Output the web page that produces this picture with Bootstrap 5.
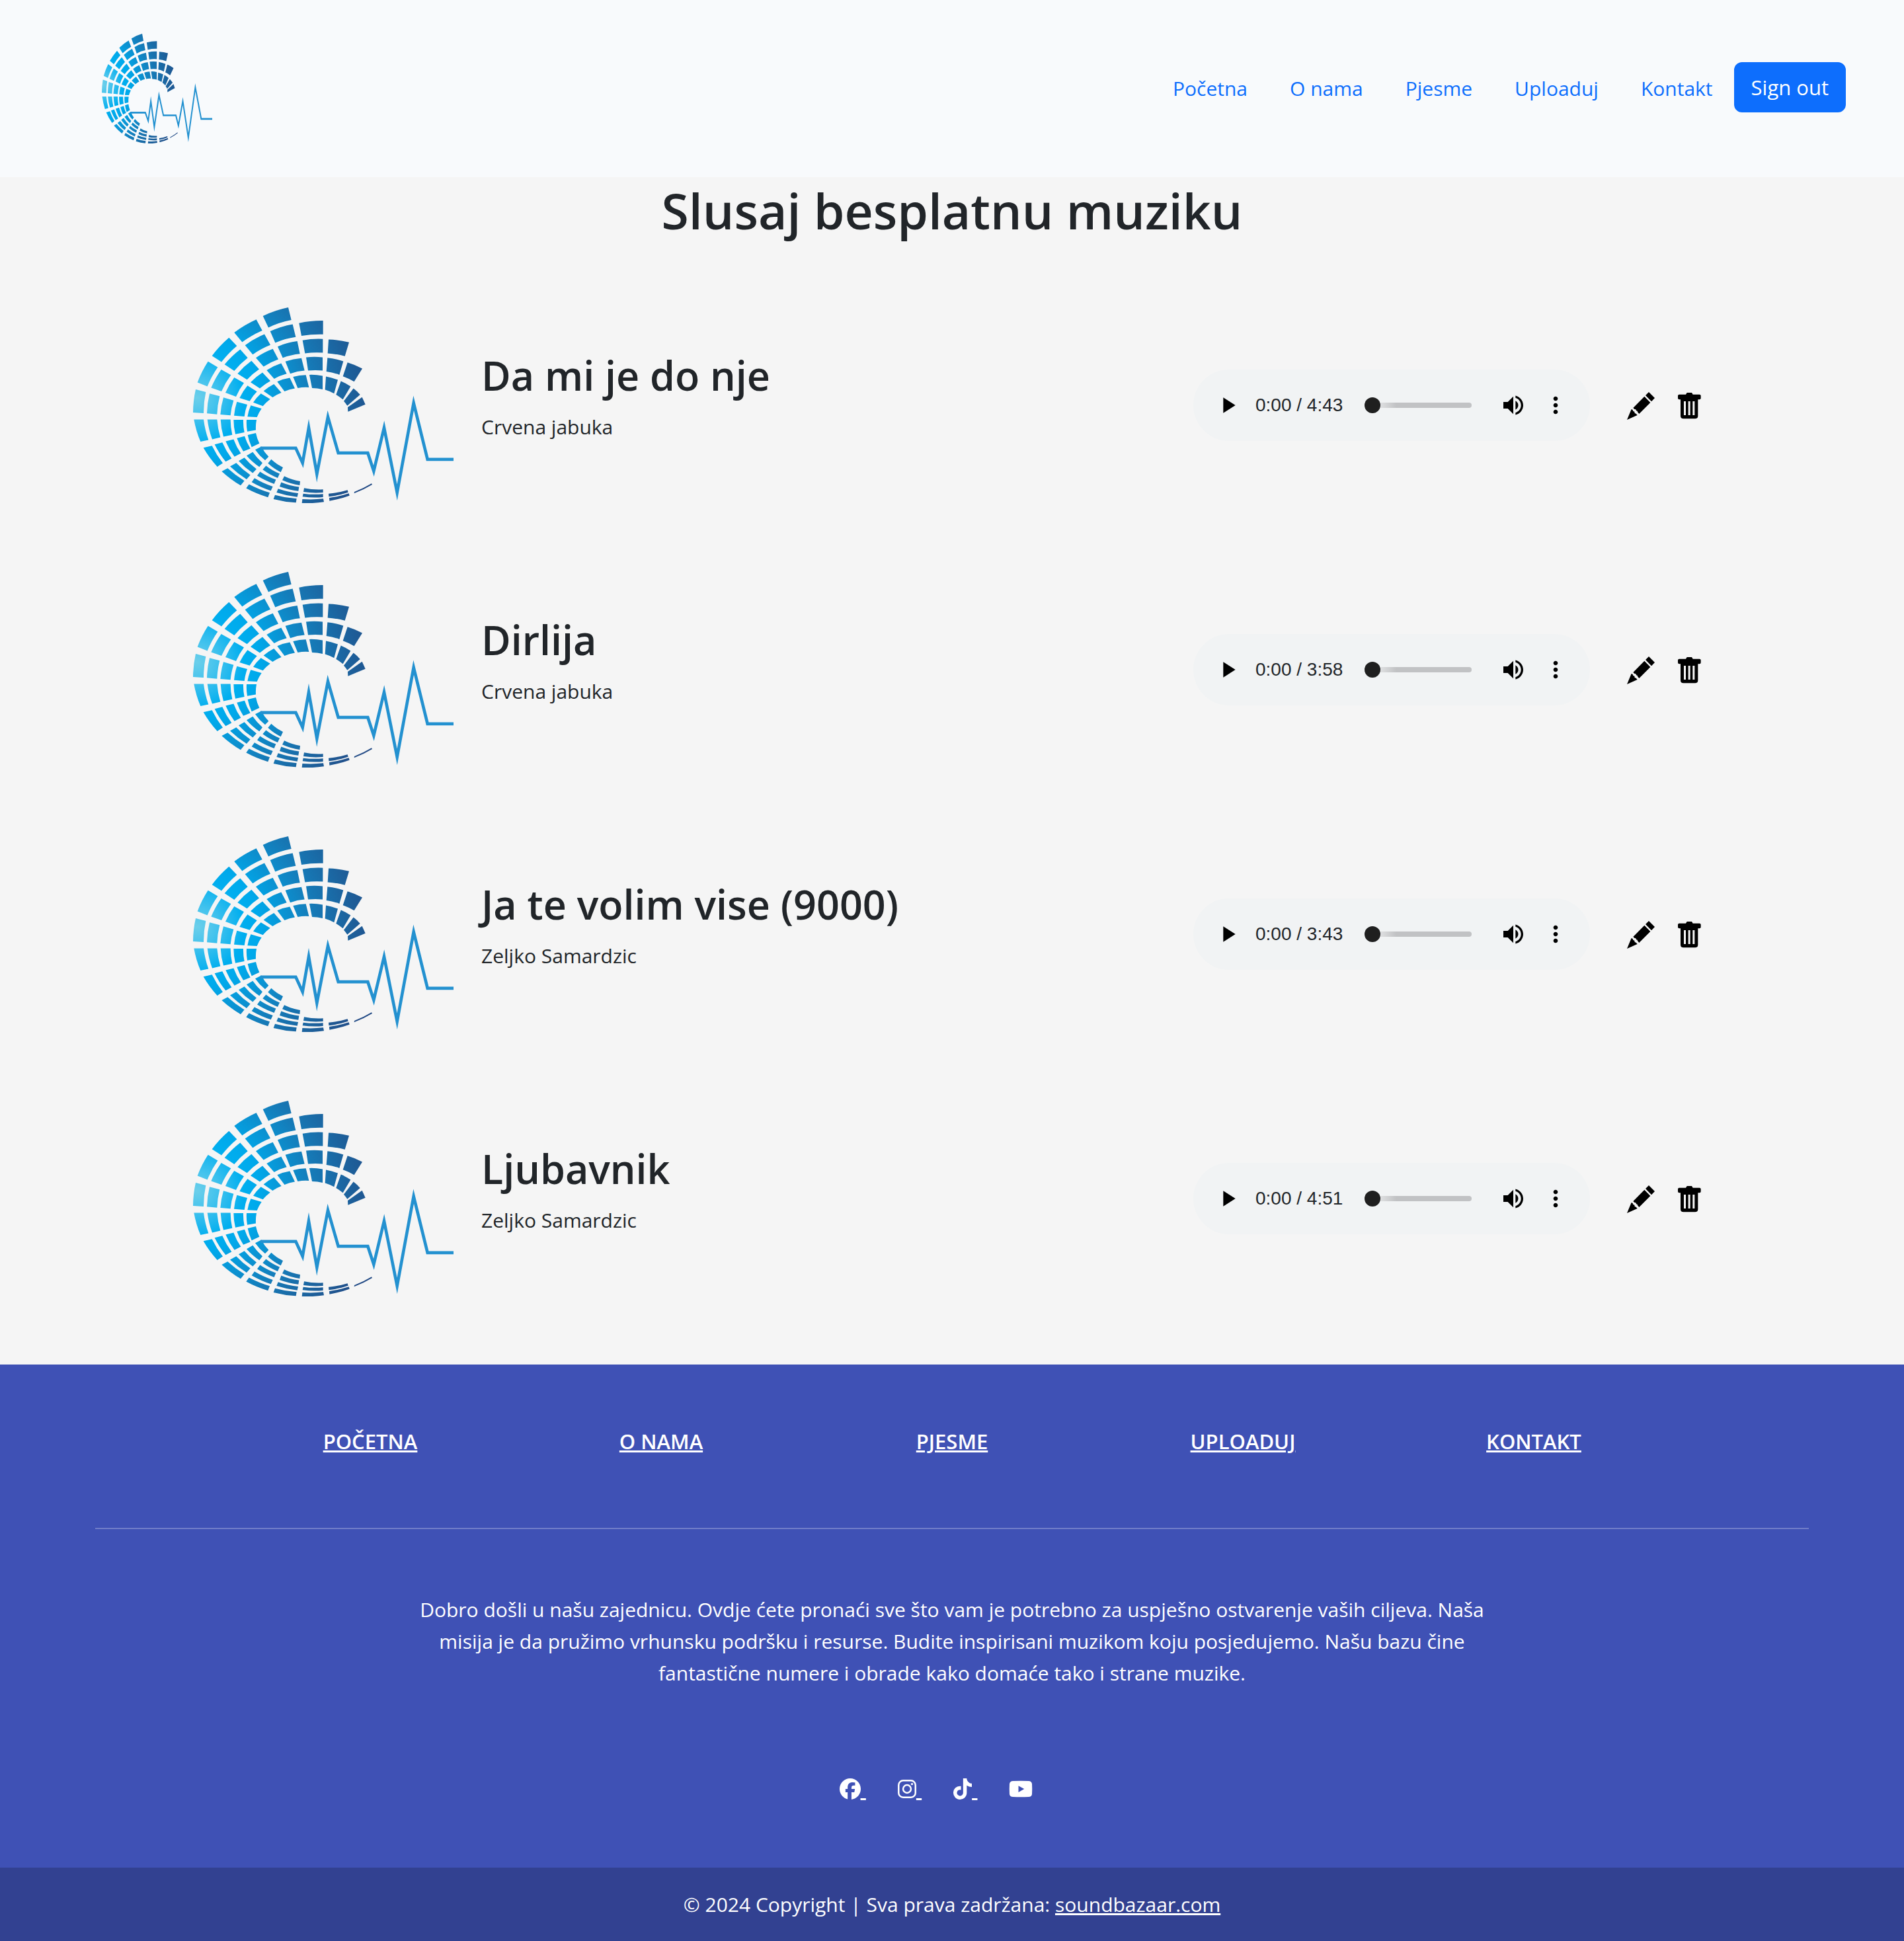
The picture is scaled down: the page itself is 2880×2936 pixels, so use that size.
<!DOCTYPE html>
<html lang="bs">
<head>
<meta charset="utf-8">
<meta name="viewport" content="width=device-width, initial-scale=1">
<title>Sound Bazaar</title>
<link href="https://cdn.jsdelivr.net/npm/bootstrap@5.3.0/dist/css/bootstrap.min.css" rel="stylesheet">
<style>
body{font-family:"Open Sans","Noto Sans",sans-serif;font-size:30px;line-height:48px;background:#f5f5f5;color:#212529}
.site-nav{background:#f8fafc;padding:51px 88px 51px 154px}
.brand-logo{width:167px;height:166px;display:block}
.site-nav .nav-link{padding:12px 32px;color:#0d6efd}
.btn-sign{font-size:31px;line-height:48px;padding:12px 24px;border:2px solid #0d6efd;border-radius:12px}
.page-title{font-size:75px;line-height:96px;font-weight:600;padding-top:2px;margin-bottom:47px}
.song-list{width:80%;padding-bottom:51px}
.song-item{height:400px}
.song-logo{width:394px;height:296px;margin-left:4px;margin-right:42px;flex:none}
.song-text{padding-bottom:26px}
.song-title{font-size:61px;line-height:76px;font-weight:600;margin-bottom:16px}
.player{width:600px;height:108px;border-radius:54px;background:#f1f3f4;padding:0 32px;margin-right:54px;font:28px/32px "Liberation Sans",Arial,sans-serif}
.icon-btn{border:0;background:none;padding:0;color:#000;display:block;line-height:0}
.player .icon-btn svg{width:40px;height:40px}
.player time{margin-left:22px;width:132px;white-space:nowrap}
.seek{appearance:none;-webkit-appearance:none;background:none;width:162px;height:24px;margin:0 43px 0 33px}
.seek::-webkit-slider-runnable-track{height:8px;border-radius:4px;background:linear-gradient(90deg,#e8e9ea 16px,#c1c2c4 48px)}
.seek::-webkit-slider-thumb{-webkit-appearance:none;width:24px;height:24px;margin-top:-8px;border-radius:50%;background:#1f1f1f}
.song-actions{gap:33px;margin-right:18px}
.ic-pencil{width:45px;height:45px}
.ic-trash{width:37px;height:41px}
.site-footer{background:#3f51b5}
.footer-in{width:90%}
.footer-nav{width:2200px;max-width:100%;padding:92px 0 106px}
.footer-nav a{font-weight:600;font-size:31px}
.footer-in hr{border-top:2px solid #fff;opacity:.25;margin:0}
.about-text{max-width:1712px;padding:98px 24px 127px}
.social{padding-bottom:95px;font-size:32px}
.social a{margin-right:48px;line-height:48px}
.social svg{height:32px;vertical-align:-4px}
.footer-copy{background:#324191;padding:32px 0}
</style>
<script src="https://cdn.jsdelivr.net/npm/bootstrap@5.3.0/dist/js/bootstrap.bundle.min.js" defer></script>
</head>
<body>
<svg width="0" height="0" class="position-absolute" aria-hidden="true">
<defs>
<radialGradient id="wave" gradientUnits="userSpaceOnUse" cx="85" cy="485" r="850">
<stop offset="0" stop-color="#6ccfea"/><stop offset=".1" stop-color="#45c3ed"/><stop offset=".25" stop-color="#00aeef"/><stop offset=".33" stop-color="#00a9eb"/><stop offset=".63" stop-color="#1679b6"/><stop offset=".83" stop-color="#1d5f9a"/><stop offset="1" stop-color="#224a85"/>
</radialGradient>
<symbol id="logo" viewBox="66 76 1182 886" preserveAspectRatio="none">
<path fill="url(#wave)" d="
M383 115A480 480 0 0 1 498 76L512 133A440 440 0 0 0 408 167Z
M416 184A410 410 0 0 1 518 152L532 210A370 370 0 0 0 439 236Z
M450 253A340 340 0 0 1 539 229L551 286A300 300 0 0 0 473 304Z
M485 321A280 280 0 0 1 558 306L572 362A240 240 0 0 0 507 376Z
M520 390A220 220 0 0 1 578 382L592 438A190 190 0 0 0 541 441Z
M547 147A480 480 0 0 1 656 136V198A480 480 0 0 0 558 205Z
M563 225A410 410 0 0 1 655 219V281A370 370 0 0 0 574 284Z
M579 302A340 340 0 0 1 654 302V362A300 300 0 0 0 588 362Z
M594 381A260 260 0 0 1 654 386V447A220 220 0 0 0 606 441Z
M681 221A410 410 0 0 1 774 234L755 297A370 370 0 0 0 677 284Z
M676 304A340 340 0 0 1 748 320L730 381A300 300 0 0 0 671 366Z
M669 389A260 260 0 0 1 723 404L706 466A220 220 0 0 0 665 449Z
M767 325A340 340 0 0 1 834 353L797 412A300 300 0 0 0 746 388Z
M737 410A240 240 0 0 1 781 434L746 493A200 200 0 0 0 715 471Z
M794 443A200 200 0 0 1 824 471L766 521A160 160 0 0 0 750 500Z
M833 482L848 515L769 548L768 528Z
M253 190A520 520 0 0 1 353 131L380 181A480 480 0 0 0 289 233Z
M302 247A450 450 0 0 1 390 197L417 246A400 400 0 0 0 337 289Z
M351 304A360 360 0 0 1 428 264L453 311A320 320 0 0 0 386 344Z
M400 360A290 290 0 0 1 466 329L491 376A250 250 0 0 0 434 399Z
M448 412A220 220 0 0 1 505 395L528 443A190 190 0 0 0 481 456Z
M152 295A520 520 0 0 1 229 213L265 250A480 480 0 0 0 195 323Z
M209 334A450 450 0 0 1 280 266L314 304A400 400 0 0 0 253 363Z
M268 376A360 360 0 0 1 331 318L366 356A320 320 0 0 0 311 403Z
M327 415A290 290 0 0 1 381 371L417 409A250 250 0 0 0 369 443Z
M386 455A220 220 0 0 1 433 423L467 462A190 190 0 0 0 427 483Z
M86 416A480 480 0 0 1 134 321L178 347A440 440 0 0 0 131 434Z
M148 440A410 410 0 0 1 194 357L238 382A370 370 0 0 0 195 456Z
M213 462A340 340 0 0 1 253 393L297 418A300 300 0 0 0 261 480Z
M277 486A280 280 0 0 1 313 430L356 457A240 240 0 0 0 323 500Z
M339 506A220 220 0 0 1 374 466L416 491A190 190 0 0 0 383 523Z
M66 552A480 480 0 0 1 78 447L124 459A440 440 0 0 0 114 555Z
M129 556A410 410 0 0 1 141 466L187 478A370 370 0 0 0 175 560Z
M190 561A340 340 0 0 1 204 484L250 497A300 300 0 0 0 236 565Z
M252 566A280 280 0 0 1 265 503L312 516A240 240 0 0 0 299 570Z
M313 571A220 220 0 0 1 328 520L377 534A190 190 0 0 0 356 573Z
M100 684A480 480 0 0 1 70 583H114A440 440 0 0 0 136 676Z
M153 673A410 410 0 0 1 131 583H175A370 370 0 0 0 190 664Z
M204 661A340 340 0 0 1 191 583H236A300 300 0 0 0 244 653Z
M258 650A280 280 0 0 1 250 585H294A240 240 0 0 0 299 642Z
M312 638A220 220 0 0 1 309 585H354A190 190 0 0 0 351 631Z
M176 797A480 480 0 0 1 113 711L152 702A440 440 0 0 0 201 781Z
M214 774A410 410 0 0 1 164 696L199 687A370 370 0 0 0 241 760Z
M254 752A340 340 0 0 1 214 682L250 673A300 300 0 0 0 283 737Z
M294 728A280 280 0 0 1 265 668L300 659A240 240 0 0 0 326 715Z
M332 708A220 220 0 0 1 314 654L351 645A190 190 0 0 0 367 692Z
M282 882A520 520 0 0 1 196 818L223 804A480 480 0 0 0 299 861Z
M309 854A450 450 0 0 1 234 796L262 780A400 400 0 0 0 326 835Z
M337 826A360 360 0 0 1 273 771L299 756A320 320 0 0 0 354 808Z
M367 798A290 290 0 0 1 309 747L337 731A250 250 0 0 0 381 780Z
M393 768A220 220 0 0 1 348 720L376 706A190 190 0 0 0 409 752Z
M406 936A520 520 0 0 1 307 895L320 877A480 480 0 0 0 414 915Z
M419 906A450 450 0 0 1 332 867L345 849A400 400 0 0 0 428 887Z
M434 875A360 360 0 0 1 357 838L370 820A320 320 0 0 0 442 856Z
M450 848A290 290 0 0 1 382 810L397 793A250 250 0 0 0 459 829Z
M464 822A220 220 0 0 1 406 782L421 764A190 190 0 0 0 474 800Z
M533 960A520 520 0 0 1 431 944L438 925A480 480 0 0 0 536 942Z
M539 934A450 450 0 0 1 445 914L452 897A400 400 0 0 0 543 917Z
M544 907A360 360 0 0 1 459 887L466 868A320 320 0 0 0 547 889Z
M550 881A290 290 0 0 1 471 858L480 840A250 250 0 0 0 552 863Z
M660 957A520 520 0 0 1 560 962L562 944A480 480 0 0 0 657 942Z
M656 935A450 450 0 0 1 563 933L566 919A400 400 0 0 0 656 921Z
M656 914A360 360 0 0 1 567 911L570 894A320 320 0 0 0 656 900Z
M776 928A520 520 0 0 1 685 952L684 938A480 480 0 0 0 773 918Z
M770 913A450 450 0 0 1 682 933L681 919A400 400 0 0 0 767 903Z
M879 878A520 520 0 0 1 797 918L798 911A480 480 0 0 0 876 873Z"/>
<path fill="none" stroke="#2391d0" stroke-width="14" stroke-miterlimit="12" d="M372 713H532L563 780L591 621L628 830L678 572L725 735H859L886 817L933 621L992 914L1067 509L1130 764H1248"/>
</symbol>
<symbol id="play" viewBox="0 0 24 24"><path d="M8 5v14l11-7z"/></symbol>
<symbol id="volume" viewBox="0 0 24 24"><path d="M3 9v6h4l5 5V4L7 9H3zm13.5 3c0-1.770-1.020-3.290-2.500-4.030v8.050c1.480-.730 2.500-2.250 2.500-4.020zM14 3.230v2.060c2.890.860 5 3.540 5 6.710s-2.110 5.850-5 6.710v2.060c4.010-.910 7-4.490 7-8.770s-2.990-7.860-7-8.770z"/></symbol>
<symbol id="more" viewBox="0 0 24 24"><path d="M12 8c1.100 0 2-.9 2-2s-.9-2-2-2-2 .9-2 2 .9 2 2 2zm0 2c-1.100 0-2 .9-2 2s.9 2 2 2 2-.9 2-2-.9-2-2-2zm0 6c-1.100 0-2 .9-2 2s.9 2 2 2 2-.9 2-2-.9-2-2-2z"/></symbol>
<symbol id="pencil" viewBox="117 63 135 135"><path d="M222 69L249 96L234 112L207 84ZM202 89L229 117L178 168L171 160L170 155L165 154L163 148L157 147L151 141ZM143 147L149 150L151 156L157 158L158 165L164 167L170 174L123 195Z"/></symbol>
<symbol id="trash" viewBox="352 66 111 123"><path fill-rule="evenodd" d="M396 69H418L423 77H453Q459 77 459 83V94Q459 100 453 100H446V174Q446 187 433 187H380Q367 187 367 174V100H361Q355 100 355 94V83Q355 77 361 77H391ZM382 108V171H391V108ZM402 108V171H411V108ZM422 108V171H431V108Z"/></symbol>
</defs>
</svg>

<nav class="site-nav d-flex align-items-center justify-content-between">
<a href="#" aria-label="Sound Bazaar"><svg class="brand-logo"><use href="#logo"/></svg></a>
<div class="d-flex align-items-center">
<ul class="nav">
<li class="nav-item"><a class="nav-link" href="#">Početna</a></li>
<li class="nav-item"><a class="nav-link" href="#">O nama</a></li>
<li class="nav-item"><a class="nav-link" href="#">Pjesme</a></li>
<li class="nav-item"><a class="nav-link" href="#">Uploaduj</a></li>
<li class="nav-item"><a class="nav-link" href="#">Kontakt</a></li>
</ul>
<button type="button" class="btn btn-primary btn-sign mb-1">Sign out</button>
</div>
</nav>

<main>
<h1 class="page-title text-center">Slusaj besplatnu muziku</h1>
<div class="song-list mx-auto">
<article class="song-item d-flex align-items-center">
<svg class="song-logo" aria-hidden="true"><use href="#logo"/></svg>
<div class="song-text flex-grow-1"><h2 class="song-title">Da mi je do nje</h2><p class="mb-0">Crvena jabuka</p></div>
<div class="player d-flex align-items-center">
<button type="button" class="icon-btn" aria-label="Play"><svg><use href="#play"/></svg></button>
<time>0:00 / 4:43</time>
<input class="seek" type="range" value="0" aria-label="Seek">
<button type="button" class="icon-btn" aria-label="Mute"><svg><use href="#volume"/></svg></button>
<button type="button" class="icon-btn ms-auto" aria-label="More"><svg><use href="#more"/></svg></button>
</div>
<div class="d-flex align-items-center song-actions"><button type="button" class="icon-btn" aria-label="Edit"><svg class="ic-pencil"><use href="#pencil"/></svg></button><button type="button" class="icon-btn" aria-label="Delete"><svg class="ic-trash"><use href="#trash"/></svg></button></div>
</article>
<article class="song-item d-flex align-items-center">
<svg class="song-logo" aria-hidden="true"><use href="#logo"/></svg>
<div class="song-text flex-grow-1"><h2 class="song-title">Dirlija</h2><p class="mb-0">Crvena jabuka</p></div>
<div class="player d-flex align-items-center">
<button type="button" class="icon-btn" aria-label="Play"><svg><use href="#play"/></svg></button>
<time>0:00 / 3:58</time>
<input class="seek" type="range" value="0" aria-label="Seek">
<button type="button" class="icon-btn" aria-label="Mute"><svg><use href="#volume"/></svg></button>
<button type="button" class="icon-btn ms-auto" aria-label="More"><svg><use href="#more"/></svg></button>
</div>
<div class="d-flex align-items-center song-actions"><button type="button" class="icon-btn" aria-label="Edit"><svg class="ic-pencil"><use href="#pencil"/></svg></button><button type="button" class="icon-btn" aria-label="Delete"><svg class="ic-trash"><use href="#trash"/></svg></button></div>
</article>
<article class="song-item d-flex align-items-center">
<svg class="song-logo" aria-hidden="true"><use href="#logo"/></svg>
<div class="song-text flex-grow-1"><h2 class="song-title">Ja te volim vise (9000)</h2><p class="mb-0">Zeljko Samardzic</p></div>
<div class="player d-flex align-items-center">
<button type="button" class="icon-btn" aria-label="Play"><svg><use href="#play"/></svg></button>
<time>0:00 / 3:43</time>
<input class="seek" type="range" value="0" aria-label="Seek">
<button type="button" class="icon-btn" aria-label="Mute"><svg><use href="#volume"/></svg></button>
<button type="button" class="icon-btn ms-auto" aria-label="More"><svg><use href="#more"/></svg></button>
</div>
<div class="d-flex align-items-center song-actions"><button type="button" class="icon-btn" aria-label="Edit"><svg class="ic-pencil"><use href="#pencil"/></svg></button><button type="button" class="icon-btn" aria-label="Delete"><svg class="ic-trash"><use href="#trash"/></svg></button></div>
</article>
<article class="song-item d-flex align-items-center">
<svg class="song-logo" aria-hidden="true"><use href="#logo"/></svg>
<div class="song-text flex-grow-1"><h2 class="song-title">Ljubavnik</h2><p class="mb-0">Zeljko Samardzic</p></div>
<div class="player d-flex align-items-center">
<button type="button" class="icon-btn" aria-label="Play"><svg><use href="#play"/></svg></button>
<time>0:00 / 4:51</time>
<input class="seek" type="range" value="0" aria-label="Seek">
<button type="button" class="icon-btn" aria-label="Mute"><svg><use href="#volume"/></svg></button>
<button type="button" class="icon-btn ms-auto" aria-label="More"><svg><use href="#more"/></svg></button>
</div>
<div class="d-flex align-items-center song-actions"><button type="button" class="icon-btn" aria-label="Edit"><svg class="ic-pencil"><use href="#pencil"/></svg></button><button type="button" class="icon-btn" aria-label="Delete"><svg class="ic-trash"><use href="#trash"/></svg></button></div>
</article>
</div>
</main>

<footer class="site-footer text-white text-center">
<div class="footer-in mx-auto">
<div class="footer-nav row g-0 mx-auto">
<div class="col"><a class="text-white" href="#">POČETNA</a></div>
<div class="col"><a class="text-white" href="#">O NAMA</a></div>
<div class="col"><a class="text-white" href="#">PJESME</a></div>
<div class="col"><a class="text-white" href="#">UPLOADUJ</a></div>
<div class="col"><a class="text-white" href="#">KONTAKT</a></div>
</div>
<hr>
<p class="about-text mx-auto mb-0">Dobro došli u našu zajednicu. Ovdje ćete pronaći sve što vam je potrebno za uspješno ostvarenje vaših ciljeva. Naša misija je da pružimo vrhunsku podršku i resurse. Budite inspirisani muzikom koju posjedujemo. Našu bazu čine fantastične numere i obrade kako domaće tako i strane muzike.</p>
<div class="social d-flex justify-content-center">
<a class="text-white" href="#" aria-label="Facebook"><svg width="32" viewBox="0 0 512 512" fill="currentColor"><path d="M512 256C512 114.600 397.400 0 256 0S0 114.600 0 256C0 376 82.700 476.800 194.200 504.500V334.200H141.400V256h52.800V222.300c0-87.100 39.400-127.500 125-127.500c16.200 0 44.200 3.200 55.700 6.400V172c-6-.6-16.500-1-29.600-1c-42 0-58.200 15.900-58.200 57.200V256h83.600l-14.400 78.200H287V510.100C413.800 494.800 512 386.900 512 256z"/></svg>&nbsp;</a>
<a class="text-white" href="#" aria-label="Instagram"><svg width="28" viewBox="0 0 448 512"><rect x="20" y="52" width="408" height="408" rx="110" fill="none" stroke="currentColor" stroke-width="40"/><circle cx="224" cy="256" r="95" fill="none" stroke="currentColor" stroke-width="40"/><circle cx="344" cy="137" r="27" fill="currentColor"/></svg>&nbsp;</a>
<a class="text-white" href="#" aria-label="TikTok"><svg width="28" viewBox="0 0 448 512" fill="currentColor"><path d="M448 209.910a210.060 210.060 0 0 1-122.770-39.250V349.380A162.550 162.550 0 1 1 185 188.310V278.200a74.620 74.620 0 1 0 52.230 71.180V0h88a121.180 121.180 0 0 0 1.860 22.170A122.180 122.180 0 0 0 381 102.390a121.430 121.430 0 0 0 67 20.140Z"/></svg>&nbsp;</a>
<a class="text-white" href="#" aria-label="YouTube"><svg width="36" viewBox="0 0 576 512" fill="currentColor"><path fill-rule="evenodd" d="M98 64Q288 56 478 64Q550 68 560 130Q568 256 560 382Q550 444 478 448Q288 456 98 448Q26 444 16 382Q8 256 16 130Q26 68 98 64ZM232 178V334L372 256Z"/></svg></a>
</div>
</div>
<div class="footer-copy">© 2024 Copyright | Sva prava zadržana: <a class="text-white" href="#">soundbazaar.com</a></div>
</footer>
</body>
</html>
